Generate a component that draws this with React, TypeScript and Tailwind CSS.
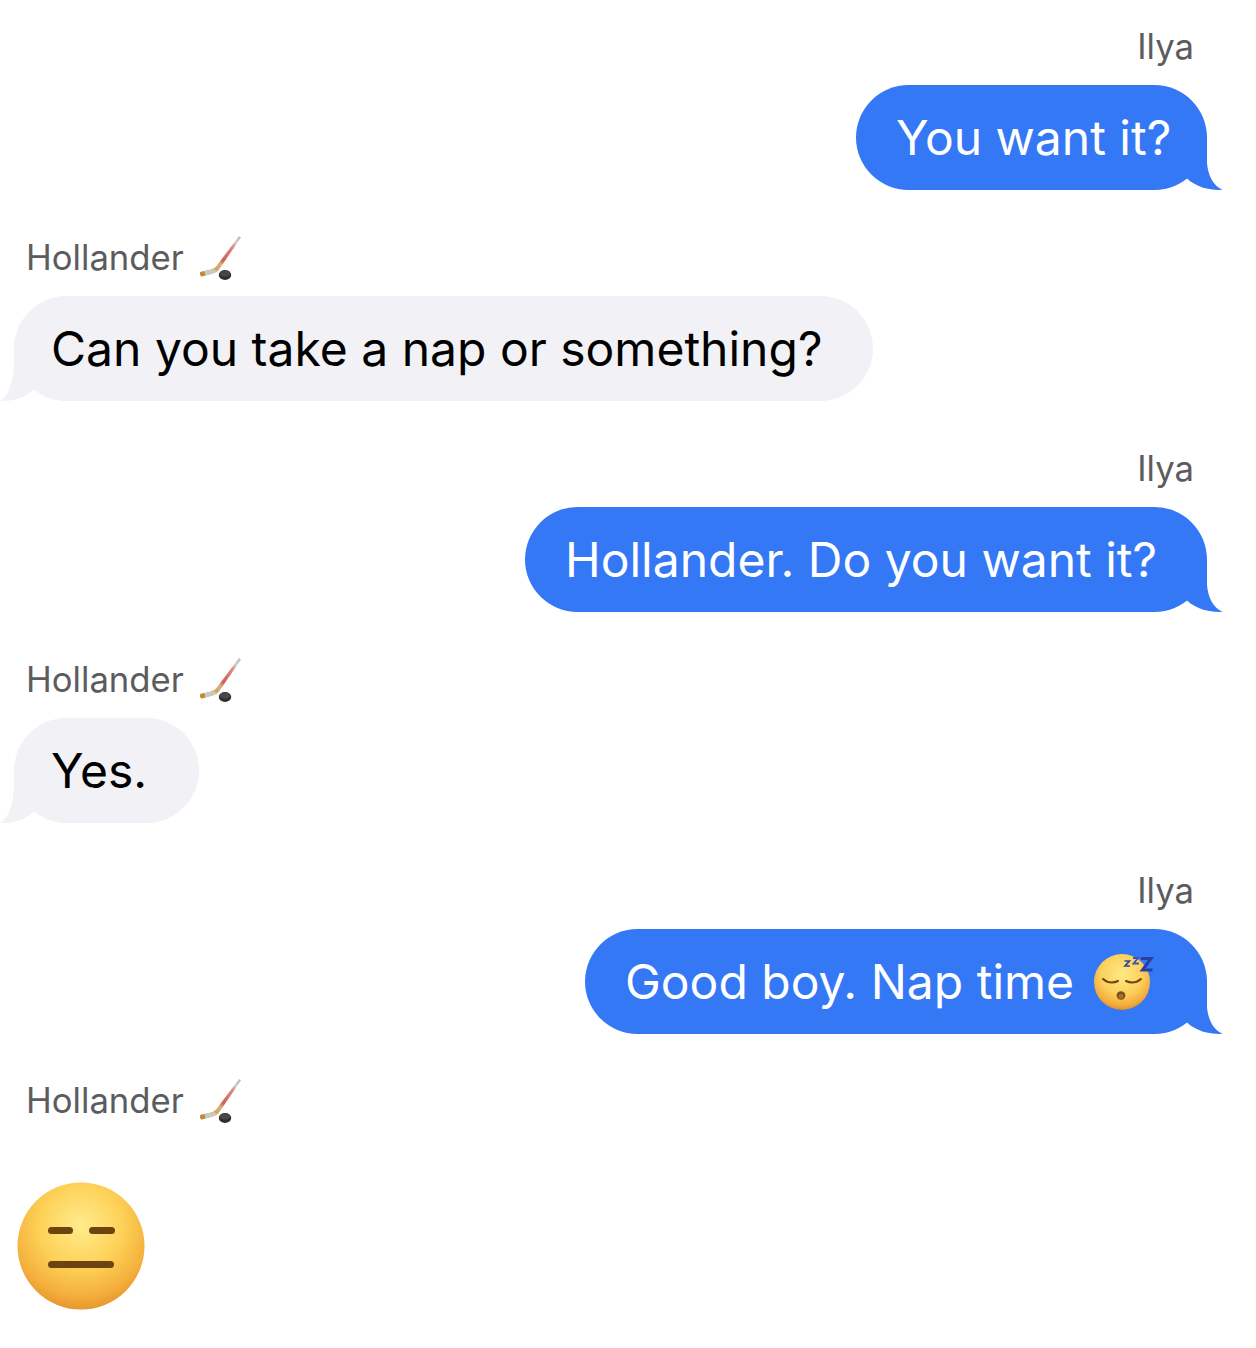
import React from "react";

const font = "font-['Inter','Liberation_Sans',sans-serif]";

function Hockey() {
  return (
    <svg width="46" height="48" viewBox="0 0 46 48" className="ml-[13px] shrink-0">
      <defs>
        <linearGradient id="shaft" gradientUnits="userSpaceOnUse" x1="18" y1="36" x2="44" y2="2">
          <stop offset="0" stopColor="#d2a25a" />
          <stop offset="0.18" stopColor="#d9b078" />
          <stop offset="0.3" stopColor="#cf5f55" />
          <stop offset="0.68" stopColor="#d98e88" />
          <stop offset="0.8" stopColor="#cfcfcf" />
          <stop offset="1" stopColor="#bdbdbd" />
        </linearGradient>
      </defs>
      <path d="M42 2 L44 3.5 L22 35.5 Q19.5 38.5 15.5 39.6 L4.5 42.6 Q2.5 41 3.2 38 L14 35.6 Q17.5 34.8 19.5 32 Z" fill="url(#shaft)" />
      <path d="M7 37.3 L17.5 35 L19.5 37.8 Q18 39 15.5 39.6 L8 41.8 Z" fill="#c9c9c4" />
      <path d="M3.2 38 L7.5 37.2 L8.3 41.6 L4.5 42.6 Q2.5 41 3.2 38 Z" fill="#c28a38" />
      <ellipse cx="28" cy="41" rx="6.2" ry="5" fill="#2e2e30" />
      <ellipse cx="28" cy="39.6" rx="5.2" ry="3" fill="#47474a" />
    </svg>
  );
}

function Sleeping() {
  return (
    <svg width="62" height="60" viewBox="0 0 62 60" className="ml-[19px] shrink-0">
      <defs>
        <radialGradient id="sl" cx="50%" cy="36%" r="64%">
          <stop offset="0" stopColor="#ffe884" />
          <stop offset="0.58" stopColor="#fcd05c" />
          <stop offset="0.88" stopColor="#f2ab3c" />
          <stop offset="1" stopColor="#dd9029" />
        </radialGradient>
      </defs>
      <circle cx="29" cy="30" r="28" fill="url(#sl)" />
      <path d="M10 27 Q17 33 25 29" fill="none" stroke="#6e4310" strokeWidth="2" strokeLinecap="round" />
      <path d="M33 29 Q41 33 48 27" fill="none" stroke="#6e4310" strokeWidth="2" strokeLinecap="round" />
      <ellipse cx="28" cy="43.5" rx="4.4" ry="4.2" fill="#7d4f18" />
      <ellipse cx="28" cy="44.3" rx="2.6" ry="2.4" fill="#a8702c" />
      <path d="M31.5 9 H36.5 L32 14 H37" fill="none" stroke="#31479f" strokeWidth="1.7" />
      <path d="M40 6 H45 L40.5 11.5 H46" fill="none" stroke="#3f55b0" strokeWidth="1.8" />
      <path d="M48 6.5 H58 L49.5 18 H59.5" fill="none" stroke="#2b3ea0" strokeWidth="3" />
    </svg>
  );
}

function Expressionless() {
  return (
    <svg width="128" height="128" viewBox="0 0 128 128">
      <defs>
        <radialGradient id="ex" cx="50%" cy="34%" r="68%">
          <stop offset="0" stopColor="#ffec8e" />
          <stop offset="0.5" stopColor="#fdd055" />
          <stop offset="0.82" stopColor="#f4ae3c" />
          <stop offset="0.96" stopColor="#e8992e" />
          <stop offset="1" stopColor="#cf8a2a" />
        </radialGradient>
      </defs>
      <circle cx="64" cy="64" r="63.5" fill="url(#ex)" />
      <rect x="31" y="45" width="25" height="7" rx="3.5" fill="#6e4310" />
      <rect x="72" y="45" width="26" height="7" rx="3.5" fill="#6e4310" />
      <rect x="31" y="79" width="66" height="7" rx="3.5" fill="#6e4310" />
    </svg>
  );
}

function Name({ who }: { who: "Ilya" | "Hollander" }) {
  if (who === "Ilya") {
    return (
      <div className={`h-[46px] pr-[62px] pb-[2px] self-end flex items-center text-[34.7px] text-[#5c5c5e] ${font}`}>
        Ilya
      </div>
    );
  }
  return (
    <div className={`h-[46px] pl-[26px] self-start flex items-center text-[34.7px] text-[#5c5c5e] ${font}`}>
      <span className="-translate-y-px">Hollander</span>
      <Hockey />
    </div>
  );
}

function Out({ children, width }: { children: React.ReactNode; width: string }) {
  return (
    <div className="self-end mr-[49px] mt-[15px] relative">
      <div className={`h-[105px] ${width} rounded-[52.5px] bg-[#3478f6] flex items-center pl-[40px] text-white text-[48px] whitespace-nowrap ${font}`}>
        {children}
      </div>
      <svg width="37" height="55" viewBox="0 0 37 55" className="absolute right-[-16px] bottom-0">
        <path d="M21 0 V28 C22 40 27 51 36.8 54.8 C26 55.6 11 53 1 43.5 L1 20 Z" fill="#3478f6" />
      </svg>
    </div>
  );
}

function In({ children, width }: { children: React.ReactNode; width: string }) {
  return (
    <div className="self-start ml-[14px] mt-[15px] relative">
      <div className={`h-[105px] ${width} rounded-[52.5px] bg-[#f1f1f6] flex items-center pl-[37px] text-black text-[48px] whitespace-nowrap ${font}`}>
        {children}
      </div>
      <svg width="36" height="55" viewBox="0 0 36 55" className="absolute left-[-14px] bottom-0">
        <path d="M14 0 V20 C13 35 9 50 0.5 54.7 C10 56 23 53 34 43.5 L34 20 Z" fill="#f1f1f6" />
      </svg>
    </div>
  );
}

export default function App() {
  return (
    <div className="w-[1256px] h-[1348px] bg-white flex flex-col pt-[24px] overflow-hidden">
      <Name who="Ilya" />
      <Out width="w-[351px]">You want it?</Out>
      <div className="h-[45px] shrink-0" />
      <Name who="Hollander" />
      <In width="w-[859px]">Can you take a nap or something?</In>
      <div className="h-[45px] shrink-0" />
      <Name who="Ilya" />
      <Out width="w-[682px]">Hollander. Do you want it?</Out>
      <div className="h-[45px] shrink-0" />
      <Name who="Hollander" />
      <In width="w-[185px]">Yes.</In>
      <div className="h-[45px] shrink-0" />
      <Name who="Ilya" />
      <Out width="w-[622px]">
        Good boy. Nap time
        <Sleeping />
      </Out>
      <div className="h-[44px] shrink-0" />
      <Name who="Hollander" />
      <div className="self-start ml-[17px] mt-[58px]">
        <Expressionless />
      </div>
    </div>
  );
}
